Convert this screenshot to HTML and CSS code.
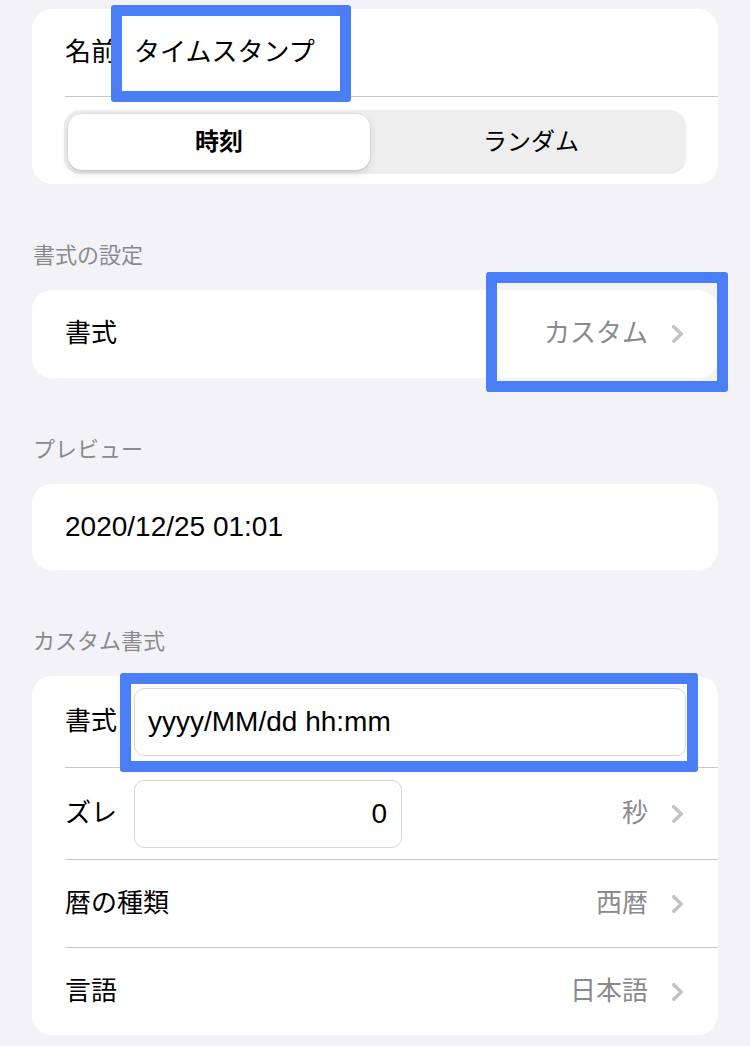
FILE: index.html
```html
<!DOCTYPE html>
<html lang="ja">
<head>
<meta charset="utf-8">
<title>タイムスタンプ</title>
<link rel="stylesheet" href="styles.css">
</head>
<body>
<div class="page">
  <section class="card">
    <div class="row">
      <span class="label">名前</span>
      <span class="value-text">タイムスタンプ</span>
    </div>
    <div class="segment-wrap">
      <div class="segmented">
        <div class="seg seg-selected">時刻</div>
        <div class="seg">ランダム</div>
      </div>
    </div>
  </section>

  <h2 class="section-title">書式の設定</h2>
  <section class="card">
    <div class="row row-tall">
      <span class="label">書式</span>
      <span class="spacer"></span>
      <span class="detail">カスタム</span>
      <svg class="chevron" viewBox="0 0 11 18" width="11" height="18"><path d="M1.8 1.8 L9.2 9 L1.8 16.2"/></svg>
    </div>
  </section>

  <h2 class="section-title">プレビュー</h2>
  <section class="card">
    <div class="row row-short">
      <span class="latin">2020/12/25 01:01</span>
    </div>
  </section>

  <h2 class="section-title">カスタム書式</h2>
  <section class="card">
    <div class="row row-field">
      <span class="label">書式</span>
      <div class="field field-wide latin">yyyy/MM/dd hh:mm</div>
    </div>
    <div class="row row-field">
      <span class="label">ズレ</span>
      <div class="field field-num latin">0</div>
      <span class="spacer"></span>
      <span class="detail">秒</span>
      <svg class="chevron" viewBox="0 0 11 18" width="11" height="18"><path d="M1.8 1.8 L9.2 9 L1.8 16.2"/></svg>
    </div>
    <div class="row">
      <span class="label">暦の種類</span>
      <span class="spacer"></span>
      <span class="detail">西暦</span>
      <svg class="chevron" viewBox="0 0 11 18" width="11" height="18"><path d="M1.8 1.8 L9.2 9 L1.8 16.2"/></svg>
    </div>
    <div class="row">
      <span class="label">言語</span>
      <span class="spacer"></span>
      <span class="detail">日本語</span>
      <svg class="chevron" viewBox="0 0 11 18" width="11" height="18"><path d="M1.8 1.8 L9.2 9 L1.8 16.2"/></svg>
    </div>
  </section>
</div>

<div class="mark mark-name"></div>
<div class="mark mark-format"></div>
<div class="mark mark-field"></div>
</body>
</html>
```
FILE: styles.css
```css
* { box-sizing: border-box; }

html, body {
  margin: 0;
  padding: 0;
}

body {
  position: relative;
  width: 750px;
  min-height: 1046px;
  background: #f2f2f7;
  font-family: "Liberation Sans", "Noto Sans CJK JP", sans-serif;
  color: #000;
  overflow: hidden;
}

.page {
  padding-top: 9px;
}

.card {
  margin: 0 32px;
  background: #fff;
  border-radius: 20px;
  overflow: hidden;
}

.row {
  display: flex;
  align-items: center;
  min-height: 87px;
  margin-left: 33px;
  padding-right: 32px;
  font-size: 26px;
  line-height: 1.2;
}

.row + .row {
  border-top: 1px solid #c8c8cb;
  min-height: 88px;
}

.row-tall {
  min-height: 88px;
}

.row-short {
  min-height: 86px;
}

.label {
  flex: none;
  width: 69px;
  white-space: nowrap;
}

.value-text {
  white-space: nowrap;
}

.spacer {
  flex: 1;
}

.detail {
  color: #8a8a8e;
  margin-right: 24px;
  white-space: nowrap;
}

.chevron {
  flex: none;
  margin-right: 3px;
}

.chevron path {
  fill: none;
  stroke: #c4c4c7;
  stroke-width: 3.6;
  stroke-linecap: round;
  stroke-linejoin: round;
}

.latin {
  font-family: "Liberation Sans", sans-serif;
  font-size: 28px;
}

.segment-wrap {
  border-top: 1px solid #c8c8cb;
  margin-left: 33px;
  padding: 13px 32px 10px 0;
}

.segmented {
  margin-left: -1px;
  display: grid;
  grid-template-columns: 1fr 1fr;
  column-gap: 10px;
  height: 64px;
  padding: 4px;
  background: #eeeeef;
  border-radius: 16px;
}

.seg {
  display: flex;
  align-items: center;
  justify-content: center;
  font-size: 24px;
  line-height: 1;
  border-radius: 14px;
}

.seg-selected {
  background: #fff;
  font-weight: bold;
  box-shadow: 0 3px 8px rgba(0, 0, 0, 0.12), 0 2px 1px rgba(0, 0, 0, 0.04), 0 0 0 1px rgba(0, 0, 0, 0.04);
}

.section-title {
  margin: 57px 0 19px;
  padding-left: 33px;
  height: 30px;
  line-height: 30px;
  font-size: 22px;
  font-weight: normal;
  color: #8a8a8e;
}

.row-field {
  min-height: 91px;
  padding-top: 12px;
  padding-bottom: 11px;
}

.row-field + .row-field {
  min-height: 92px;
  padding-bottom: 11px;
}

.field {
  height: 68px;
  display: flex;
  align-items: center;
  border: 1px solid #d6d6d9;
  border-radius: 10px;
  background: #fff;
  line-height: 1;
}

.field-wide {
  flex: 1;
  padding-left: 13px;
}

.field-num {
  width: 268px;
  justify-content: flex-end;
  padding-right: 14px;
}

.mark {
  position: absolute;
  border: 11px solid #4a7ef7;
  border-radius: 3px;
  pointer-events: none;
}

.mark-name {
  left: 111px;
  top: 5px;
  width: 240px;
  height: 97px;
}

.mark-format {
  left: 486px;
  top: 272px;
  width: 242px;
  height: 120px;
}

.mark-field {
  left: 120px;
  top: 673px;
  width: 578px;
  height: 99px;
}
```
